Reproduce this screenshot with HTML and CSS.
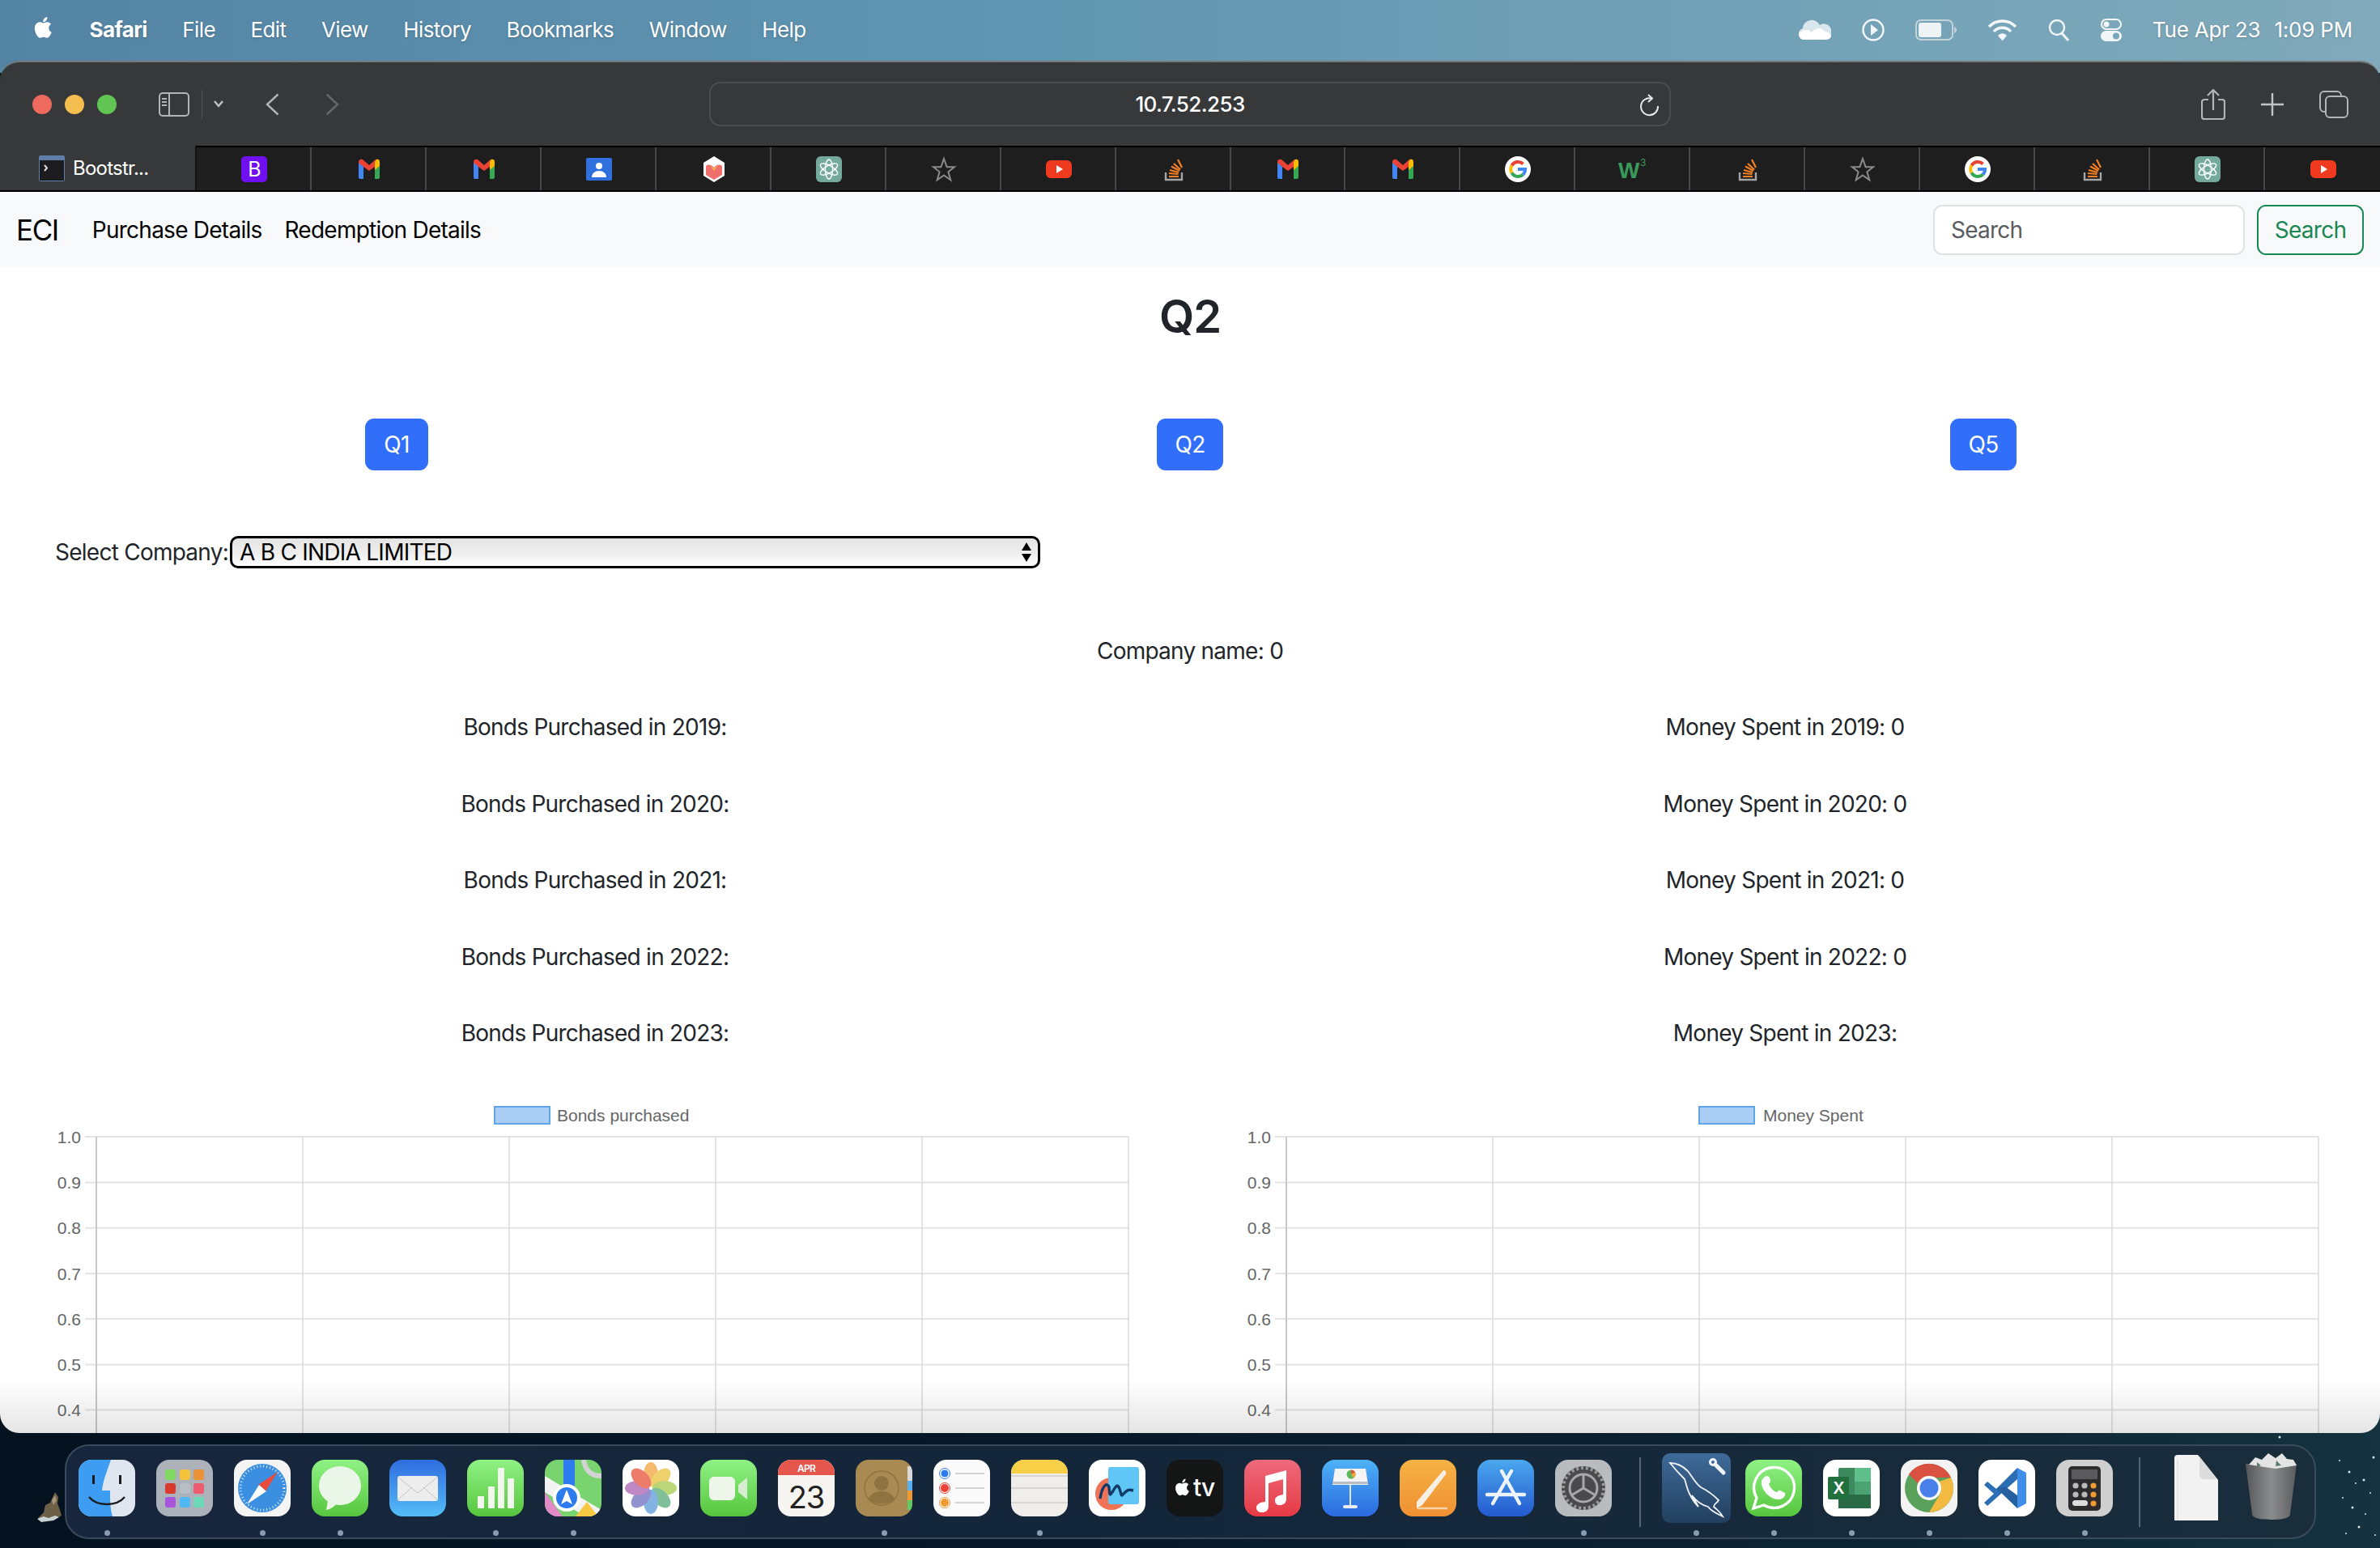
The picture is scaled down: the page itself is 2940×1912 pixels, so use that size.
FILE: index.html
```html
<!DOCTYPE html>
<html lang="en">
<head>
  <meta charset="UTF-8">
  <title>Bootstrap demo</title>
  <link rel="stylesheet" href="styles.css">
</head>
<body>
  <!-- shared drawings, used by the tab bar and the charts -->
  <svg class="defs" aria-hidden="true">
    <symbol id="apple" viewBox="0 0 24 24"><path fill="currentColor" d="M17.05 12.54c-.03-2.6 2.12-3.85 2.22-3.91-1.21-1.77-3.09-2.01-3.76-2.04-1.6-.16-3.12.94-3.93.94-.81 0-2.06-.92-3.39-.89-1.74.03-3.35 1.01-4.25 2.57-1.81 3.14-.46 7.8 1.3 10.35.86 1.25 1.89 2.65 3.24 2.6 1.3-.05 1.79-.84 3.36-.84 1.57 0 2.01.84 3.39.81 1.4-.02 2.28-1.27 3.14-2.53.99-1.45 1.4-2.85 1.42-2.92-.03-.01-2.72-1.04-2.74-4.14zM14.47 4.9c.72-.87 1.2-2.08 1.07-3.28-1.03.04-2.29.69-3.03 1.55-.66.77-1.24 2-1.09 3.18 1.15.09 2.33-.58 3.05-1.45z"/></symbol>
    <symbol id="fav-gmail" viewBox="0 0 32 32">
      <path fill="#4285f4" d="M3 7h6v21H5a2 2 0 0 1-2-2z"/>
      <path fill="#34a853" d="M23 7h6v19a2 2 0 0 1-2 2h-4z"/>
      <path fill="#ea4335" d="M3 7c0-3 3-4 5-3l8 7 8-7c2-1 3 1 3 1l-4 8-7 5-7-5-6-5z"/>
      <path fill="#fbbc04" d="M23 7l2-3c2-1 4 0 4 3v5l-6 5z"/>
    </symbol>
    <symbol id="fav-gpt" viewBox="0 0 32 32">
      <rect width="32" height="32" rx="6" fill="#74aa9c"/>
      <g fill="none" stroke="#fff" stroke-width="1.400">
        <ellipse cx="16" cy="16" rx="4.500" ry="12"/>
        <ellipse cx="16" cy="16" rx="4.500" ry="12" transform="rotate(60 16 16)"/>
        <ellipse cx="16" cy="16" rx="4.500" ry="12" transform="rotate(120 16 16)"/>
      </g>
    </symbol>
    <symbol id="fav-star" viewBox="0 0 32 32"><path fill="none" stroke="#8a8a8a" stroke-width="2" d="M16 3l3.6 10.2H29l-7.6 6.1 2.9 10L16 23.5l-8.3 5.8 2.9-10L3 13.2h9.4z"/></symbol>
    <symbol id="fav-yt" viewBox="0 0 32 32">
      <rect x="0" y="5" width="32" height="22" rx="6" fill="#f03a20"/>
      <path fill="#fff" d="M13 11l8 5-8 5z"/>
    </symbol>
    <symbol id="fav-so" viewBox="0 0 32 32">
      <path fill="none" stroke="#a5a5a5" stroke-width="2.400" d="M6 20v9h20v-9"/>
      <g stroke="#f48024" stroke-width="2.200">
        <path d="M10 25h12"/><path d="M10 21l11.500 1"/><path d="M11 17l11 3"/><path d="M13 12.500l10 5.500"/><path d="M16 9l8 7.500"/><path d="M21 4l5 10"/>
      </g>
    </symbol>
    <symbol id="fav-google" viewBox="0 0 32 32">
      <circle cx="16" cy="16" r="16" fill="#fff"/>
      <g fill="none" stroke-width="4">
        <path stroke="#ea4335" d="M8.500 11.500A9 9 0 0 1 22.500 9.500"/>
        <path stroke="#fbbc04" d="M8.500 20.500a9 9 0 0 1 0-9"/>
        <path stroke="#34a853" d="M22.500 22.500A9 9 0 0 1 8.500 20.500"/>
        <path stroke="#4285f4" d="M16 16h9a9 9 0 0 1-2.500 6.500"/>
      </g>
    </symbol>
    <symbol id="chart-grid" viewBox="0 0 1470 430">
      <g class="chart-hline">
        <path d="M105 64H1394"/><path d="M105 120.500H1394"/><path d="M105 176.700H1394"/><path d="M105 233H1394"/>
        <path d="M105 289H1394"/><path d="M105 345.500H1394"/><path d="M105 401.500H1394"/>
      </g>
      <g class="chart-vline">
        <path d="M374 64V430"/><path d="M629 64V430"/><path d="M884 64V430"/><path d="M1139 64V430"/><path d="M1394 64V430"/>
      </g>
      <path class="chart-axis" d="M119 64V430"/>
    </symbol>
  </svg>

  <header class="menu-bar">
    <nav class="menu-left">
      <svg class="menu-apple"><use href="#apple"/></svg>
      <strong>Safari</strong>
      <span>File</span>
      <span>Edit</span>
      <span>View</span>
      <span>History</span>
      <span>Bookmarks</span>
      <span>Window</span>
      <span>Help</span>
    </nav>
    <div class="menu-right">
      <svg width="40" height="28" viewBox="0 0 40 28"><path fill="#d9e6ec" d="M14 2a11 11 0 0 1 12 6 9 9 0 0 1 14 9c0 6-3 9-8 9H7c-4 0-7-3-7-7s2-6 5-7c0-5 4-9 9-10z"/><path fill="#fff" d="M0 20c4-8 12-7 16-3 5-6 12-6 16-1 5 0 8 3 8 6-1 3-4 4-8 4H7c-4 0-6-2-7-6z"/></svg>
      <svg width="28" height="28" viewBox="0 0 28 28"><circle cx="14" cy="14" r="12.500" fill="none" stroke="#f2f6f8" stroke-width="2.400"/><path fill="#f2f6f8" d="M11 7l9 7-9 7z"/></svg>
      <svg width="51" height="26" viewBox="0 0 51 26"><rect x="1" y="1" width="45" height="24" rx="6" fill="none" stroke="#c5d3da" stroke-width="2"/><rect x="4" y="4" width="28" height="18" rx="3" fill="#eef3f6"/><path fill="#c5d3da" d="M48 9c2 1 3 2 3 4s-1 3-3 4z"/></svg>
      <svg width="37" height="28" viewBox="0 0 37 28"><g fill="none" stroke="#f5f8fa" stroke-width="3.400"><path d="M2 10a23 23 0 0 1 33 0"/><path d="M8 16a14 14 0 0 1 21 0"/></g><path fill="#f5f8fa" d="M13 21a7 7 0 0 1 11 0l-5.500 6.500z"/></svg>
      <svg width="27" height="28" viewBox="0 0 27 28"><circle cx="11" cy="11" r="9" fill="none" stroke="#f2f6f8" stroke-width="2.400"/><path stroke="#f2f6f8" stroke-width="3" d="M17 18l8 9"/></svg>
      <svg width="26" height="28" viewBox="0 0 26 28"><rect x="1" y="1" width="24" height="12" rx="6" fill="none" stroke="#f2f6f8" stroke-width="2"/><circle cx="7" cy="7" r="3.500" fill="#f2f6f8"/><rect y="15" width="26" height="13" rx="6.500" fill="#f2f6f8"/><circle cx="19" cy="21.500" r="4" fill="#7ba5b8"/></svg>
      <div class="menu-clock"><span>Tue Apr 23</span><span>1:09 PM</span></div>
    </div>
  </header>

  <main class="window">
    <div class="toolbar">
      <div class="toolbar-left">
        <span class="light light-red"></span>
        <span class="light light-yellow"></span>
        <span class="light light-green"></span>
        <svg class="tool-sidebar" width="38" height="30" viewBox="0 0 38 30"><rect x="1" y="1" width="36" height="28" rx="4" fill="none" stroke="#b4b4b6" stroke-width="2"/><path stroke="#b4b4b6" stroke-width="2" d="M13 1v28"/><path stroke="#b4b4b6" stroke-width="2" d="M4 8h6M4 12h6M4 16h6"/></svg>
        <span class="tool-sep"></span>
        <svg class="tool-chevron" width="14" height="9" viewBox="0 0 14 9"><path fill="none" stroke="#c4c4c6" stroke-width="2.400" d="M2 1l5 6 5-6"/></svg>
        <svg class="tool-back" width="17" height="28" viewBox="0 0 17 28"><path fill="none" stroke="#b4b4b6" stroke-width="2.400" d="M15.500 1.500L2 14l13.500 12.500"/></svg>
        <svg class="tool-forward" width="17" height="28" viewBox="0 0 17 28"><path fill="none" stroke="#66676a" stroke-width="2.400" d="M1.500 1.500L15 14 1.500 26.500"/></svg>
      </div>
      <div class="url-bar">
        <span>10.7.52.253</span>
        <svg class="url-reload" width="24" height="28" viewBox="0 0 24 28"><path fill="none" stroke="#e8e8e8" stroke-width="2" d="M14 5.500A10.500 10.500 0 1 0 22 15"/><path fill="none" stroke="#e8e8e8" stroke-width="2" d="M10 1l5 4.500-5 4.500"/></svg>
      </div>
      <div class="toolbar-right">
        <svg width="30" height="38" viewBox="0 0 30 38"><path fill="none" stroke="#b4b4b6" stroke-width="2.200" d="M9 13H4a3 3 0 0 0-3 3v18a3 3 0 0 0 3 3h22a3 3 0 0 0 3-3V16a3 3 0 0 0-3-3h-5M15 26V2M8 8l7-7 7 7"/></svg>
        <svg width="28" height="28" viewBox="0 0 28 28"><path stroke="#c4c4c6" stroke-width="2.400" d="M14 0v28M0 14h28"/></svg>
        <svg width="36" height="34" viewBox="0 0 36 34"><rect x="1" y="1" width="26" height="25" rx="5" fill="none" stroke="#b4b4b6" stroke-width="2"/><rect x="8" y="7" width="27" height="26" rx="5" fill="#37383a" stroke="#b4b4b6" stroke-width="2"/></svg>
      </div>
    </div>

    <div class="tab-bar">
      <div class="tab tab-active">
        <svg width="32" height="32" viewBox="0 0 32 32"><rect width="32" height="32" rx="2" fill="#5f7fa8"/><rect x="1" y="6" width="30" height="25" fill="#1c1c1e"/><path fill="none" stroke="#ddd" stroke-width="2" d="M7 12l3 3.500-3 3.500"/></svg>
        <span>Bootstr...</span>
      </div>
      <div class="tab"><svg width="32" height="32" viewBox="0 0 32 32"><rect width="32" height="32" rx="5" fill="#7010f0"/><text class="fav-b" x="16" y="25">B</text></svg></div>
      <div class="tab"><svg width="32" height="32"><use href="#fav-gmail"/></svg></div>
      <div class="tab"><svg width="32" height="32"><use href="#fav-gmail"/></svg></div>
      <div class="tab"><svg width="32" height="32" viewBox="0 0 32 32"><rect y="2" width="32" height="28" rx="2" fill="#2f6fde"/><circle cx="16" cy="12" r="4" fill="#fff"/><path fill="#fff" d="M7 26c0-5 4-8 9-8s9 3 9 8z"/></svg></div>
      <div class="tab"><svg width="32" height="32" viewBox="0 0 32 32"><path fill="#fff" d="M16 0l13 8v16l-13 8-13-8V8z"/><path fill="#ef6f6c" d="M6 12c4-3 7-1 10 2 3-3 6-5 10-2v11l-10 6-10-6z"/><path fill="#f5b93f" d="M11 11l5 7 5-7-5 4z"/></svg></div>
      <div class="tab"><svg width="32" height="32"><use href="#fav-gpt"/></svg></div>
      <div class="tab"><svg width="32" height="32"><use href="#fav-star"/></svg></div>
      <div class="tab"><svg width="32" height="32"><use href="#fav-yt"/></svg></div>
      <div class="tab"><svg width="32" height="32"><use href="#fav-so"/></svg></div>
      <div class="tab"><svg width="32" height="32"><use href="#fav-gmail"/></svg></div>
      <div class="tab"><svg width="32" height="32"><use href="#fav-gmail"/></svg></div>
      <div class="tab"><svg width="32" height="32"><use href="#fav-google"/></svg></div>
      <div class="tab"><svg width="36" height="32" viewBox="0 0 36 32"><text class="fav-w" x="0" y="27">W</text><text class="fav-w3" x="27" y="12">3</text></svg></div>
      <div class="tab"><svg width="32" height="32"><use href="#fav-so"/></svg></div>
      <div class="tab"><svg width="32" height="32"><use href="#fav-star"/></svg></div>
      <div class="tab"><svg width="32" height="32"><use href="#fav-google"/></svg></div>
      <div class="tab"><svg width="32" height="32"><use href="#fav-so"/></svg></div>
      <div class="tab"><svg width="32" height="32"><use href="#fav-gpt"/></svg></div>
      <div class="tab"><svg width="32" height="32"><use href="#fav-yt"/></svg></div>
    </div>

    <div class="page">
      <nav class="navbar">
        <a class="navbar-brand">ECI</a>
        <a class="nav-link">Purchase Details</a>
        <a class="nav-link">Redemption Details</a>
        <form class="navbar-search">
          <input class="search-input" type="text" placeholder="Search">
          <button class="search-button" type="button">Search</button>
        </form>
      </nav>

      <h2 class="page-title">Q2</h2>

      <div class="question-row">
        <div class="question-cell"><button class="btn-question btn-q1" type="button">Q1</button></div>
        <div class="question-cell"><button class="btn-question" type="button">Q2</button></div>
        <div class="question-cell"><button class="btn-question" type="button">Q5</button></div>
      </div>

      <div class="company-select">
        <label for="company">Select Company:</label>
        <div class="select-box">
          <select id="company"><option>A B C INDIA LIMITED</option></select>
        </div>
      </div>

      <p class="company-name">Company name: 0</p>

      <div class="stats">
        <p>Bonds Purchased in 2019:</p><p>Money Spent in 2019: 0</p>
        <p>Bonds Purchased in 2020:</p><p>Money Spent in 2020: 0</p>
        <p>Bonds Purchased in 2021:</p><p>Money Spent in 2021: 0</p>
        <p>Bonds Purchased in 2022:</p><p>Money Spent in 2022: 0</p>
        <p>Bonds Purchased in 2023:</p><p>Money Spent in 2023:</p>
      </div>

      <div class="charts">
        <svg class="chart" viewBox="0 0 1470 430">
          <use href="#chart-grid" width="1470" height="430"/>
          <rect class="legend-box" x="611" y="27" width="68" height="21"/>
          <text class="legend-text" x="688" y="45">Bonds purchased</text>
          <text class="tick" x="100" y="72">1.0</text>
          <text class="tick" x="100" y="128">0.9</text>
          <text class="tick" x="100" y="184">0.8</text>
          <text class="tick" x="100" y="241">0.7</text>
          <text class="tick" x="100" y="297">0.6</text>
          <text class="tick" x="100" y="353">0.5</text>
          <text class="tick" x="100" y="409">0.4</text>
        </svg>
        <svg class="chart" viewBox="0 0 1470 430">
          <use href="#chart-grid" width="1470" height="430"/>
          <rect class="legend-box" x="629" y="27" width="68" height="21"/>
          <text class="legend-text" x="708" y="45">Money Spent</text>
          <text class="tick" x="100" y="72">1.0</text>
          <text class="tick" x="100" y="128">0.9</text>
          <text class="tick" x="100" y="184">0.8</text>
          <text class="tick" x="100" y="241">0.7</text>
          <text class="tick" x="100" y="297">0.6</text>
          <text class="tick" x="100" y="353">0.5</text>
          <text class="tick" x="100" y="409">0.4</text>
        </svg>
      </div>
      <div class="page-fade"></div>
    </div>
  </main>

  <!-- bits of the wallpaper that show around the dock -->
  <svg class="wallpaper-rock" width="34" height="38" viewBox="0 0 34 38"><path fill="#6e5f47" d="M24 0l4 6-1 8 3 8 2 7-8 4-18 2-3-3 7-7 2-9 6-3z"/><path fill="#c9d2d2" d="M2 33l8-3 6 2 8-3 5 2-7 4-15 2z"/><path fill="#a8987a" d="M24 4l2 6-4 6-2-6z"/></svg>
  <svg class="wallpaper-specks" width="130" height="142" viewBox="0 0 130 142" fill="#d8e4e8"><circle cx="6" cy="5" r="1.500"/><circle cx="80" cy="34" r="1"/><circle cx="92" cy="48" r="1.500"/><circle cx="100" cy="62" r="1"/><circle cx="110" cy="58" r="1.500"/><circle cx="118" cy="74" r="1"/><circle cx="84" cy="80" r="1"/><circle cx="96" cy="92" r="1.500"/><circle cx="122" cy="30" r="1.500"/><circle cx="112" cy="100" r="1"/><circle cx="104" cy="116" r="1.500"/><circle cx="124" cy="126" r="1"/><circle cx="88" cy="124" r="1"/></svg>

  <footer class="dock">
    <div class="dock-item on"><svg class="app" viewBox="0 0 70 70"><rect width="70" height="70" fill="#dfe6f0"/><path fill="#3c9df3" d="M0 0h40c-4 12-10 26-11 38h10c0 12 0 22 3 32H0z"/><path fill="#1c1c1e" d="M17 19h3v11h-3zM50 19h3v11h-3z"/><path fill="none" stroke="#1c1c1e" stroke-width="2.400" d="M13 46c10 12 34 12 44 0"/></svg><i></i></div>
    <div class="dock-item"><svg class="app" viewBox="0 0 70 70"><rect width="70" height="70" fill="#acb1ba"/><rect x="11" y="12" width="13" height="13" rx="3" fill="#7fd860"/><rect x="29" y="12" width="13" height="13" rx="3" fill="#f5c33b"/><rect x="46" y="12" width="13" height="13" rx="3" fill="#ec9236"/><rect x="11" y="29" width="13" height="13" rx="3" fill="#d83a2e"/><rect x="29" y="29" width="13" height="13" rx="3" fill="#b7bfc4"/><rect x="46" y="29" width="13" height="13" rx="3" fill="#ee5a6e"/><rect x="11" y="46" width="13" height="13" rx="3" fill="#a855dd"/><rect x="29" y="46" width="13" height="13" rx="3" fill="#4fb8f5"/><rect x="46" y="46" width="13" height="13" rx="3" fill="#6cd8b8"/></svg><i></i></div>
    <div class="dock-item on"><svg class="app" viewBox="0 0 70 70"><rect width="70" height="70" fill="#f4f4f4"/><circle cx="35" cy="35" r="30" fill="#3a8fe0"/><circle cx="35" cy="35" r="27" fill="none" stroke="#dcecfa" stroke-width="3" stroke-dasharray="1 3"/><path fill="#ea4b3c" d="M54 15L30 31l9 8z"/><path fill="#fff" d="M16 55l24-16-9-8z"/></svg><i></i></div>
    <div class="dock-item on"><svg class="app" viewBox="0 0 70 70"><defs><linearGradient id="g-green" x1="0" y1="0" x2="0" y2="1"><stop offset="0" stop-color="#8ff284"/><stop offset="1" stop-color="#57c63e"/></linearGradient></defs><rect width="70" height="70" fill="url(#g-green)"/><ellipse cx="35" cy="32" rx="26" ry="24" fill="#eaf6e8"/><path fill="#eaf6e8" d="M20 50l-2 12c5-1 10-4 13-8z"/></svg><i></i></div>
    <div class="dock-item"><svg class="app" viewBox="0 0 70 70"><defs><linearGradient id="g-mail" x1="0" y1="0" x2="0" y2="1"><stop offset="0" stop-color="#2f6de0"/><stop offset="1" stop-color="#55bdf7"/></linearGradient></defs><rect width="70" height="70" fill="url(#g-mail)"/><rect x="10" y="20" width="50" height="31" rx="3" fill="#ededed"/><path fill="none" stroke="#c4c4c4" stroke-width="1" d="M10 21l25 20 25-20M10 50l18-16M60 50L42 34"/></svg><i></i></div>
    <div class="dock-item on"><svg class="app" viewBox="0 0 70 70"><rect width="70" height="70" fill="url(#g-green)"/><rect x="13" y="45" width="8" height="15" rx="1" fill="#f2f8ee"/><rect x="26" y="33" width="8" height="27" rx="1" fill="#f2f8ee"/><rect x="38" y="10" width="8" height="50" rx="1" fill="#f2f8ee"/><rect x="50" y="23" width="8" height="37" rx="1" fill="#f2f8ee"/></svg><i></i></div>
    <div class="dock-item on"><svg class="app" viewBox="0 0 70 70"><rect width="70" height="70" fill="#79d46f"/><path fill="#f3f3f3" d="M0 20l70 42v8H50L0 40z"/><path fill="#e28ac8" d="M0 40l22 30H0z"/><path fill="#f7c843" d="M38 70l14-18 14 18z"/><path fill="none" stroke="#d2d2d2" stroke-width="6" d="M48 0c2 14 10 20 22 20"/><rect x="23" y="0" width="14" height="40" fill="#2e7bf0"/><circle cx="27" cy="47" r="17" fill="#fff"/><circle cx="27" cy="47" r="13" fill="#2e7bf0"/><path fill="#fff" d="M27 37l7 18-7-4-7 4z"/></svg><i></i></div>
    <div class="dock-item"><svg class="app" viewBox="0 0 70 70"><rect width="70" height="70" fill="#fff"/><g opacity=".75"><ellipse cx="35" cy="18" rx="9" ry="15" fill="#f2a33c"/><ellipse cx="35" cy="18" rx="9" ry="15" fill="#e8c23c" transform="rotate(45 35 35)"/><ellipse cx="35" cy="18" rx="9" ry="15" fill="#a4c84a" transform="rotate(90 35 35)"/><ellipse cx="35" cy="18" rx="9" ry="15" fill="#55ab7a" transform="rotate(135 35 35)"/><ellipse cx="35" cy="18" rx="9" ry="15" fill="#5a9ad8" transform="rotate(180 35 35)"/><ellipse cx="35" cy="18" rx="9" ry="15" fill="#6e6ec0" transform="rotate(225 35 35)"/><ellipse cx="35" cy="18" rx="9" ry="15" fill="#a860b0" transform="rotate(270 35 35)"/><ellipse cx="35" cy="18" rx="9" ry="15" fill="#e8503c" transform="rotate(315 35 35)"/></g></svg><i></i></div>
    <div class="dock-item"><svg class="app" viewBox="0 0 70 70"><rect width="70" height="70" fill="url(#g-green)"/><rect x="11" y="21" width="32" height="29" rx="6" fill="#eef6ea"/><path fill="#d7ecd0" d="M47 31l11-9v27l-11-9z"/></svg><i></i></div>
    <div class="dock-item"><svg class="app" viewBox="0 0 70 70"><rect width="70" height="70" fill="#f7f5f2"/><rect width="70" height="19" fill="#e5564d"/><text class="cal-month" x="35" y="15">APR</text><text class="cal-day" x="35" y="60">23</text></svg><i></i></div>
    <div class="dock-item on"><svg class="app" viewBox="0 0 70 70"><rect width="70" height="70" fill="#a98a52"/><rect x="64" y="8" width="6" height="18" fill="#d8d8d8"/><rect x="64" y="26" width="6" height="12" fill="#58b0f0"/><rect x="64" y="38" width="6" height="12" fill="#f09a32"/><rect x="64" y="50" width="6" height="12" fill="#62c862"/><circle cx="32" cy="35" r="21" fill="none" stroke="#8f7442" stroke-width="1.500"/><circle cx="32" cy="29" r="9" fill="#8f7442"/><path fill="#8f7442" d="M16 49c3-8 9-10 16-10s13 2 16 10c-8 7-24 7-32 0z"/></svg><i></i></div>
    <div class="dock-item"><svg class="app" viewBox="0 0 70 70"><rect width="70" height="70" fill="#fbfafa"/><circle cx="14" cy="17" r="5" fill="#2e7bf0" stroke="#fff" stroke-width="1"/><circle cx="14" cy="17" r="6.500" fill="none" stroke="#2e7bf0"/><circle cx="14" cy="35" r="5" fill="#ea4335"/><circle cx="14" cy="35" r="6.500" fill="none" stroke="#ea4335"/><circle cx="14" cy="53" r="5" fill="#f09a32"/><circle cx="14" cy="53" r="6.500" fill="none" stroke="#f09a32"/><path stroke="#c8c8c8" stroke-width="1.500" d="M27 17h36M27 35h36M27 53h36"/></svg><i></i></div>
    <div class="dock-item on"><svg class="app" viewBox="0 0 70 70"><rect width="70" height="70" fill="#f0eeea"/><path fill="#f8d048" d="M0 0h70v17H0z"/><path stroke="#cfccc6" stroke-width="1.500" d="M0 20h70M0 35h70M0 53h70"/></svg><i></i></div>
    <div class="dock-item"><svg class="app" viewBox="0 0 70 70"><rect width="70" height="70" fill="#fff"/><circle cx="28" cy="42" r="20" fill="#ef7354"/><rect x="24" y="9" width="38" height="46" rx="3" fill="#5fc6f5"/><path fill="none" stroke="#123a68" stroke-width="3.400" d="M14 48c2-14 8-22 11-14 1 8 0 12 4 6s6-12 9-4 1 10 5 6 5-6 12-4"/></svg><i></i></div>
    <div class="dock-item"><svg class="app" viewBox="0 0 70 70"><rect width="70" height="70" fill="#141616"/><use href="#apple" x="8" y="19" width="24" height="30" color="#fff"/><text class="tv-text" x="33" y="45">tv</text></svg><i></i></div>
    <div class="dock-item"><svg class="app" viewBox="0 0 70 70"><defs><linearGradient id="g-music" x1="0" y1="0" x2="0" y2="1"><stop offset="0" stop-color="#ee6a7c"/><stop offset="1" stop-color="#e63a44"/></linearGradient></defs><rect width="70" height="70" fill="url(#g-music)"/><path fill="#fff" d="M26 20l26-7v35c0 6-4 8-8 8s-6-2-6-6 4-6 10-7V24l-18 5v28c0 6-4 8-8 8s-7-2-7-6 5-7 11-7z"/></svg><i></i></div>
    <div class="dock-item"><svg class="app" viewBox="0 0 70 70"><defs><linearGradient id="g-key" x1="0" y1="0" x2="0" y2="1"><stop offset="0" stop-color="#4db2f6"/><stop offset="1" stop-color="#2a6ae0"/></linearGradient></defs><rect width="70" height="70" fill="url(#g-key)"/><rect x="34" y="28" width="2" height="30" fill="#dfe4ea"/><rect x="26" y="56" width="18" height="4" rx="2" fill="#e8ecf0"/><path fill="#f4f4f4" d="M16 11h38l3 20H13z"/><rect x="13" y="27" width="44" height="3" fill="#b8bec6"/><circle cx="36" cy="18" r="5.500" fill="#5cb85c"/><path fill="#e84e3c" d="M36 18v-5.500a5.500 5.500 0 0 1 5 3z"/><path fill="#f0a83c" d="M36 18l5-2.500a5.500 5.500 0 0 1-2 7z"/></svg><i></i></div>
    <div class="dock-item"><svg class="app" viewBox="0 0 70 70"><defs><linearGradient id="g-pages" x1="0" y1="0" x2="0" y2="1"><stop offset="0" stop-color="#f6b244"/><stop offset="1" stop-color="#ef9032"/></linearGradient></defs><rect width="70" height="70" fill="url(#g-pages)"/><path fill="#f6efe4" d="M54 13c3 0 4 3 3 5L28 56l-7 4 0-8z"/><path stroke="#f5d6a8" stroke-width="2.400" d="M22 60h37"/></svg><i></i></div>
    <div class="dock-item"><svg class="app" viewBox="0 0 70 70"><defs><linearGradient id="g-store" x1="0" y1="0" x2="0" y2="1"><stop offset="0" stop-color="#4aa8ee"/><stop offset="1" stop-color="#2459d0"/></linearGradient></defs><rect width="70" height="70" fill="url(#g-store)"/><g stroke="#eef4fb" stroke-width="4.400" stroke-linecap="round"><path d="M42 14L19 54"/><path d="M30 14l22 40"/><path d="M12 43h46"/></g></svg><i></i></div>
    <div class="dock-item on"><svg class="app" viewBox="0 0 70 70"><rect width="70" height="70" fill="#b8bcbe"/><circle cx="35" cy="35" r="27" fill="#4a4a4c"/><circle cx="35" cy="35" r="25" fill="none" stroke="#9a9a9c" stroke-width="4" stroke-dasharray="3 3"/><circle cx="35" cy="35" r="17" fill="none" stroke="#a8a8aa" stroke-width="3"/><g stroke="#a8a8aa" stroke-width="3"><path d="M35 35V18M35 35l15 9M35 35l-15 9"/></g></svg><i></i></div>
    <span class="dock-sep"></span>
    <div class="dock-item dock-item-mysql on"><svg class="app-mysql" viewBox="0 0 85 86"><defs><linearGradient id="g-mysql" x1="0" y1="0" x2="0" y2="1"><stop offset="0" stop-color="#3f6a99"/><stop offset="1" stop-color="#22405f"/></linearGradient></defs><rect width="85" height="86" rx="10" fill="url(#g-mysql)"/><path fill="none" stroke="#f0f4f8" stroke-width="1.800" d="M10 12c8 0 16 4 22 10 6 8 10 16 16 20 8 4 14 8 22 16-2 4-6 4-6 8 4 4 8 6 11 12-6-3-14-6-18-12-8-2-14-6-20-14l8 14c-4-4-8-10-11-16-3-6-4-12-6-18-4-4-10-10-18-20z"/><g fill="none" stroke="#f0f4f8"><circle cx="63" cy="11" r="3.500" stroke-width="3"/><path stroke-width="5" stroke-linecap="round" d="M66 14l10 10"/></g></svg><i></i></div>
    <div class="dock-item on"><svg class="app" viewBox="0 0 70 70"><rect width="70" height="70" fill="url(#g-green)"/><path fill="none" stroke="#fff" stroke-width="3.400" d="M10 60l4-13a25 25 0 1 1 9 9z"/><path fill="#fff" d="M26 20c3-1 5 4 5 6s-2 3-2 4c2 5 6 9 10 10 2-2 3-3 4-2l6 3c1 2-1 8-8 8-12 0-22-14-21-21 0-4 3-7 6-8z"/></svg><i></i></div>
    <div class="dock-item on"><svg class="app" viewBox="0 0 70 70"><rect width="70" height="70" fill="#fff"/><rect x="19" y="10" width="40" height="50" rx="2" fill="#3c8a5e"/><rect x="39" y="10" width="20" height="17" fill="#5fbf8a"/><rect x="39" y="27" width="20" height="16" fill="#4ba273"/><rect x="19" y="43" width="40" height="17" fill="#2a6a45"/><rect x="6" y="21" width="26" height="28" rx="2" fill="#23703f"/><text class="excel-x" x="19" y="42">X</text></svg><i></i></div>
    <div class="dock-item on"><svg class="app" viewBox="0 0 70 70"><rect width="70" height="70" fill="#f3f3f3"/><circle cx="35" cy="35" r="30" fill="#5aa25c"/><path fill="#d95140" d="M10 18A30 30 0 0 1 62 22H35a14 14 0 0 0-13 8z"/><path fill="#f3ba42" d="M62 22a30 30 0 0 1-27 43l13-22a14 14 0 0 0-1-16z"/><circle cx="35" cy="35" r="15" fill="#fff"/><circle cx="35" cy="35" r="11.500" fill="#4a80ea"/></svg><i></i></div>
    <div class="dock-item on"><svg class="app" viewBox="0 0 70 70"><rect width="70" height="70" fill="#fff"/><path fill="#2b6eb3" d="M48 10L22 36 11 27l-4 4 12 11-12 11 4 4 37-33z"/><path fill="#3f8fe8" d="M48 10l11 6v38l-11 6z"/><path fill="#2560a0" d="M22 35L48 60V44L33 33z"/></svg><i></i></div>
    <div class="dock-item on"><svg class="app" viewBox="0 0 70 70"><rect width="70" height="70" fill="#cfcfcf"/><rect x="15" y="8" width="40" height="55" rx="5" fill="#2c2c2e"/><rect x="19" y="12" width="32" height="12" rx="1" fill="#5a5a5c"/><circle cx="24" cy="32" r="3.600" fill="#bbb"/><circle cx="35" cy="32" r="3.600" fill="#bbb"/><circle cx="46" cy="32" r="3.600" fill="#f09a32"/><circle cx="24" cy="43" r="3.600" fill="#bbb"/><circle cx="35" cy="43" r="3.600" fill="#bbb"/><circle cx="46" cy="43" r="3.600" fill="#f09a32"/><rect x="20" y="50" width="19" height="7" rx="3.500" fill="#ddd"/><circle cx="46" cy="54" r="3.600" fill="#f09a32"/></svg><i></i></div>
    <span class="dock-sep dock-sep-last"></span>
    <div class="dock-doc"><svg width="54" height="81" viewBox="0 0 54 81"><path fill="#f2f2f2" d="M4 0h25l25 31v50H0V4a4 4 0 0 1 4-4z"/><path fill="#dcdcdc" d="M31 2l22 28-16 0c-4 0-6-3-6-6z"/><path fill="none" stroke="#d8d8d8" d="M4 6v75"/></svg></div>
    <div class="dock-trash"><svg width="63" height="82" viewBox="0 0 63 82"><defs><linearGradient id="g-trash" x1="0" y1="0" x2="1" y2="0"><stop offset="0" stop-color="#555758"/><stop offset=".5" stop-color="#8a8c8e"/><stop offset="1" stop-color="#5a5c5e"/></linearGradient></defs><path fill="url(#g-trash)" d="M0 13h63l-8 62c0 4-6 7-23 7S8 79 8 75z"/><path fill="#e4e4e4" d="M4 14l8-9 8 3 8-8 9 6 8-6 6 7 8 1 4 7-26 4z"/><path fill="#5a7a70" d="M14 11l5 4-5 2zM38 9l6 6-7 1z"/></svg></div>
  </footer>
</body>
</html>
```

FILE: styles.css
```css
* {
  margin: 0;
  padding: 0;
  box-sizing: border-box;
}

html,
body {
  width: 2940px;
  height: 1912px;
  overflow: hidden;
}

body {
  position: relative;
  font-family: Inter, 'Liberation Sans', sans-serif;
  font-size: 28px;
  letter-spacing: -0.75px;
  color: #212529;
  background:
    linear-gradient(90deg, #5484a4 0%, #5f95b1 40%, #80aabb 100%) 0 0 / 100% 90px no-repeat,
    linear-gradient(90deg, #04121f 0%, #07182a 45%, #0d2533 80%, #14323f 100%);
}

.defs {
  position: absolute;
  width: 0;
  height: 0;
}

/* Menu bar */
.menu-bar {
  height: 75px;
  display: flex;
  justify-content: space-between;
  align-items: center;
  padding: 0 34px 2px 41px;
  color: #fff;
  font-size: 26px;
  letter-spacing: -0.6px;
  text-shadow: 0 1px 3px rgba(0, 0, 0, 0.2);
}

.menu-left {
  display: flex;
  align-items: center;
  gap: 43.5px;
}

.menu-left strong {
  font-weight: 700;
}

.menu-apple {
  width: 30px;
  height: 34px;
  margin: -6px -2px 0 -2px;
  color: #fff;
}

.menu-right {
  display: flex;
  align-items: center;
  gap: 38px;
}

.menu-clock {
  display: flex;
  gap: 17px;
  letter-spacing: -0.2px;
}

/* Browser window */
.window {
  width: 2940px;
  height: 1695px;
  border-radius: 24px;
  overflow: hidden;
  display: flex;
  flex-direction: column;
  border-top: 2px solid #77787a;
}

.toolbar {
  height: 103px;
  flex: none;
  display: grid;
  grid-template-columns: 876px 1188px 1fr;
  align-items: center;
  background: #37383a;
}

.toolbar-left {
  display: flex;
  align-items: center;
  padding-left: 40px;
}

.light {
  width: 24px;
  height: 24px;
  border-radius: 50%;
  margin-right: 16px;
}

.light-red {
  background: #ee6a5f;
}

.light-yellow {
  background: #f5bf4f;
}

.light-green {
  background: #61c554;
  margin-right: 52px;
}

.tool-sep {
  width: 1px;
  height: 36px;
  margin: 0 13px 0 15px;
  background: #55565a;
}

.tool-back {
  margin-left: 51px;
}

.tool-forward {
  margin-left: 57px;
}

.url-bar {
  position: relative;
  height: 55px;
  display: flex;
  align-items: center;
  justify-content: center;
  border: 2px solid #4c4d50;
  border-radius: 14px;
  color: #fff;
  font-size: 26px;
  font-weight: 500;
  letter-spacing: -0.6px;
}

.url-reload {
  position: absolute;
  right: 12px;
  top: 13px;
}

.toolbar-right {
  display: flex;
  align-items: center;
  justify-content: flex-end;
  gap: 44px;
  padding-right: 39px;
}

/* Tabs */
.tab-bar {
  height: 57px;
  flex: none;
  display: flex;
  background: #1e1e1e;
  border-top: 2px solid #000;
  border-bottom: 2px solid #000;
}

.tab {
  width: 142px;
  display: flex;
  align-items: center;
  justify-content: center;
  padding-left: 2px;
  border-right: 2px solid #48484a;
}

.tab:last-child {
  border-right: none;
}

.tab-active {
  width: 243px;
  gap: 10px;
  justify-content: flex-start;
  padding-left: 48px;
  margin-top: -2px;
  background: #37383a;
  color: #fff;
  font-size: 24px;
  border-right: 2px solid #111;
}

.fav-b {
  font-family: Inter, sans-serif;
  font-size: 25px;
  fill: #fff;
  text-anchor: middle;
}

.fav-w {
  font-family: 'Liberation Sans', sans-serif;
  font-weight: 700;
  font-size: 28px;
  fill: #3a9a5c;
}

.fav-w3 {
  font-family: Inter, sans-serif;
  font-size: 12px;
  fill: #3a9a5c;
}

/* Page inside the browser */
.page {
  position: relative;
  flex: 1;
  overflow: hidden;
  background: #fff;
}

.navbar {
  height: 93px;
  display: flex;
  align-items: center;
  padding: 0 20px 0 20px;
  background: #f8f9fa;
}

.navbar-brand {
  font-size: 35px;
  margin-right: 28px;
  letter-spacing: -1.4px;
  color: #000;
}

.nav-link {
  padding: 0 14px;
  color: #000;
}

.navbar-search {
  margin-left: auto;
  display: flex;
  gap: 15px;
}

.search-input {
  width: 385px;
  height: 62px;
  padding: 0 20px;
  font: inherit;
  letter-spacing: inherit;
  border: 2px solid #dee2e6;
  border-radius: 11px;
  background: #fff;
}

.search-input::placeholder {
  color: #595c5f;
  opacity: 1;
}

.search-button {
  width: 132px;
  height: 62px;
  font: inherit;
  letter-spacing: inherit;
  color: #198754;
  background: transparent;
  border: 2px solid #198754;
  border-radius: 11px;
}

.page-title {
  margin-top: 28px;
  font-size: 56px;
  font-weight: 600;
  letter-spacing: -1px;
  line-height: 67px;
  text-align: center;
}

.question-row {
  margin-top: 92px;
  display: grid;
  grid-template-columns: repeat(3, 1fr);
}

.question-cell {
  display: flex;
  justify-content: center;
}

.btn-question {
  width: 82px;
  height: 64px;
  font: inherit;
  letter-spacing: inherit;
  color: #fff;
  background: #316ffa;
  border: none;
  border-radius: 11px;
}

.btn-q1 {
  width: 78px;
}

.company-select {
  margin-top: 81px;
  height: 40px;
  display: flex;
  align-items: center;
  padding-left: 68px;
  gap: 2px;
}

.select-box {
  position: relative;
  width: 1001px;
  height: 40px;
}

.select-box select {
  width: 100%;
  height: 100%;
  padding-left: 9px;
  font: inherit;
  letter-spacing: inherit;
  color: #000;
  appearance: none;
  background: linear-gradient(180deg, #e4e4e4 0%, #eeeeee 55%, #fff 100%);
  border: 3px solid #000;
  border-radius: 10px;
}

.select-box::before,
.select-box::after {
  content: '';
  position: absolute;
  right: 11px;
  border-left: 6px solid transparent;
  border-right: 6px solid transparent;
}

.select-box::before {
  top: 8px;
  border-bottom: 10px solid #000;
}

.select-box::after {
  bottom: 8px;
  border-top: 10px solid #000;
}

.company-name {
  margin-top: 81px;
  line-height: 42px;
  text-align: center;
}

.stats {
  margin-top: 52px;
  display: grid;
  grid-template-columns: 1fr 1fr;
  row-gap: 52.5px;
  line-height: 42px;
  text-align: center;
}

/* Charts */
.charts {
  margin-top: 43px;
  display: grid;
  grid-template-columns: 1fr 1fr;
}

.chart {
  display: block;
  width: 1470px;
  height: 430px;
}

.chart-hline path {
  stroke: #e4e4e4;
  stroke-width: 2;
  fill: none;
}

.chart-vline path {
  stroke: #dadada;
  stroke-width: 1.5;
  fill: none;
}

.chart-axis {
  stroke: #c8c8c8;
  stroke-width: 2;
  fill: none;
}

.legend-box {
  fill: #a9cdf3;
  stroke: #5ea5ea;
  stroke-width: 2;
}

.legend-text,
.tick {
  font-family: 'Liberation Sans', sans-serif;
  font-size: 21px;
  letter-spacing: 0;
  fill: #666;
}

.tick {
  text-anchor: end;
}

.page-fade {
  position: absolute;
  left: 0;
  right: 0;
  bottom: 0;
  height: 66px;
  pointer-events: none;
  background: linear-gradient(180deg, rgba(0, 0, 0, 0), rgba(0, 0, 0, 0.1));
}

/* Wallpaper */
.wallpaper-rock {
  position: absolute;
  left: 44px;
  top: 1843px;
}

.wallpaper-specks {
  position: absolute;
  right: 0;
  top: 1770px;
}

/* Dock */
.dock {
  position: absolute;
  left: 80px;
  top: 1784px;
  width: 2781px;
  height: 117px;
  display: flex;
  padding-left: 2px;
  background: linear-gradient(90deg, #17263c 0%, #14263a 50%, #1a2d3b 100%);
  border: 2px solid #3a4a5a;
  border-radius: 30px;
}

.dock-item {
  position: relative;
  width: 96px;
  flex: none;
  display: flex;
  justify-content: center;
  padding-top: 17px;
}

.dock-item i {
  display: none;
  position: absolute;
  left: 50%;
  top: 104px;
  width: 7px;
  height: 7px;
  margin-left: -3.5px;
  border-radius: 50%;
  background: #8c9cb0;
}

.dock-item.on i {
  display: block;
}

.app {
  width: 70px;
  height: 70px;
  border-radius: 16px;
}

.dock-sep {
  flex: none;
  width: 2px;
  height: 86px;
  margin: 14px 0 0 21px;
  background: #566572;
}

.dock-item-mysql {
  margin-left: 20px;
  padding-top: 9px;
}

.app-mysql {
  width: 85px;
  height: 86px;
}

.dock-sep-last {
  margin-left: 19px;
}

.dock-doc {
  margin: 11px 0 0 42px;
}

.dock-trash {
  margin: 9px 0 0 34px;
}

.cal-month {
  font-family: Inter, sans-serif;
  font-size: 12px;
  font-weight: 600;
  fill: #fff;
  text-anchor: middle;
}

.cal-day {
  font-family: Inter, sans-serif;
  font-size: 38px;
  letter-spacing: -1px;
  fill: #222;
  text-anchor: middle;
}

.tv-text {
  font-family: Inter, sans-serif;
  font-size: 30px;
  font-weight: 500;
  fill: #fff;
}

.excel-x {
  font-family: Inter, sans-serif;
  font-size: 20px;
  font-weight: 600;
  fill: #fff;
  text-anchor: middle;
}
```
